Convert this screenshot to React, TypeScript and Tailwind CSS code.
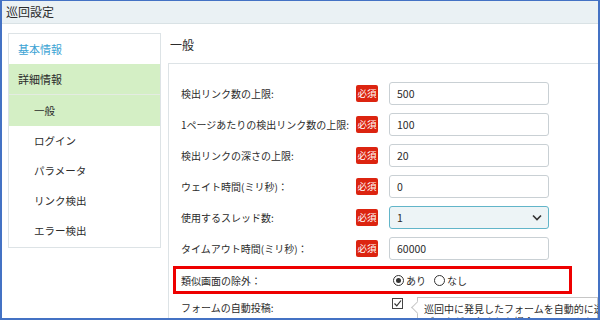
import React from "react";

const rows: { label: string; value: string; select?: boolean }[] = [
  { label: "検出リンク数の上限:", value: "500" },
  { label: "1ページあたりの検出リンク数の上限:", value: "100" },
  { label: "検出リンクの深さの上限:", value: "20" },
  { label: "ウェイト時間(ミリ秒)：", value: "0" },
  { label: "使用するスレッド数:", value: "1", select: true },
  { label: "タイムアウト時間(ミリ秒)：", value: "60000" },
];

function Badge() {
  return (
    <div className="w-[22px] h-[17px] shrink-0 rounded-[2px] bg-[#dc2410] text-white text-[9.5px] flex items-center justify-center leading-none">
      必須
    </div>
  );
}

function Radio({ checked }: { checked?: boolean }) {
  return (
    <span className="w-[11px] h-[11px] rounded-full border border-[#333] flex items-center justify-center shrink-0">
      {checked && <span className="w-[5px] h-[5px] rounded-full bg-[#333]" />}
    </span>
  );
}

export default function App() {
  return (
    <div className="w-[600px] h-[320px] overflow-hidden bg-white border-[#4472c4] border-t border-x-2 border-b-2 font-['Noto_Sans_CJK_JP',sans-serif] text-[#2b2b2b]">
      <div className="h-[23px] bg-[#eaf1f4] border-b border-[#d9e2e5] pl-[4px] flex items-center text-[12px]">
        巡回設定
      </div>
      <div className="flex pt-[9px] pl-[6px] gap-[7px]">
        <div className="w-[153px] shrink-0 self-start border border-[#dde3e6] pb-[1px] text-[10.5px]">
          <div className="h-[30px] flex items-center pl-[9px] text-[11px] text-[#3ba3d4]">基本情報</div>
          <div className="h-[31px] flex items-center pl-[9px] text-[11px] bg-[#d4efc5] border-b border-[#e4ece2]">詳細情報</div>
          <div className="h-[31px] flex items-center pl-[25px] bg-[#d4efc5]">一般</div>
          <div className="h-[30px] flex items-center pl-[25px]">ログイン</div>
          <div className="h-[30px] flex items-center pl-[25px]">パラメータ</div>
          <div className="h-[30px] flex items-center pl-[25px]">リンク検出</div>
          <div className="h-[30px] flex items-center pl-[25px]">エラー検出</div>
        </div>
        <div className="flex-1 min-w-0 flex flex-col">
          <div className="h-[30px] pt-[4px] pl-[2px] text-[12px] leading-[16px]">一般</div>
          <div className="flex-1 border-l border-t border-[#dde3e6] pt-[14px] text-[10px]">
            {rows.map((r) => (
              <div key={r.label} className="h-[31px] flex items-center pl-[12px]">
                <div className="w-[175px] shrink-0">{r.label}</div>
                <Badge />
                {r.select ? (
                  <div className="ml-[11px] w-[160px] h-[23px] shrink-0 rounded-[3px] border border-[#62b5c9] bg-[#edf4f6] flex items-center justify-between pl-[7px] pr-[6px] text-[10.5px]">
                    <span>1</span>
                    <svg width="10" height="7" viewBox="0 0 10 7">
                      <polyline points="1,1.5 5,5.5 9,1.5" fill="none" stroke="#333" strokeWidth="1.6" />
                    </svg>
                  </div>
                ) : (
                  <div className="ml-[11px] w-[160px] h-[23px] shrink-0 rounded-[3px] border border-[#c9d0d4] bg-white flex items-center pl-[7px] text-[10.5px]">
                    {r.value}
                  </div>
                )}
              </div>
            ))}
            <div className="mt-[2px] ml-[4px] w-[399px] h-[28px] border-[3px] border-[#ee0000] flex items-center pl-[5px]">
              <div className="w-[212px] shrink-0">類似画面の除外：</div>
              <div className="flex items-center gap-[2px]">
                <Radio checked />
                <span className="mr-[6px]">あり</span>
                <Radio />
                <span>なし</span>
              </div>
            </div>
            <div className="h-[26px] flex pl-[12px]">
              <div className="w-[211px] shrink-0 self-center">フォームの自動投稿:</div>
              <div className="mt-[4px] w-[11px] h-[11px] shrink-0 border border-[#444] flex items-center justify-center">
                <svg width="9" height="9" viewBox="0 0 9 9">
                  <polyline points="1.5,4.5 3.8,6.8 8,1.5" fill="none" stroke="#333" strokeWidth="1.2" />
                </svg>
              </div>
              <div className="relative ml-[14px] mt-[3px] flex-1 min-w-0 border border-[#c6c6c6] bg-white pl-[6px] pt-[4px] text-[10px] leading-[13px] whitespace-nowrap">
                <span className="absolute left-[-5px] top-[5px] w-[9px] h-[9px] rotate-45 bg-white border-l border-b border-[#c6c6c6]" />
                <div>巡回中に発見したフォームを自動的に送信します。</div>
                <div>データが入力された場合、フォームを自動的に送信します。</div>
              </div>
            </div>
          </div>
        </div>
      </div>
    </div>
  );
}
